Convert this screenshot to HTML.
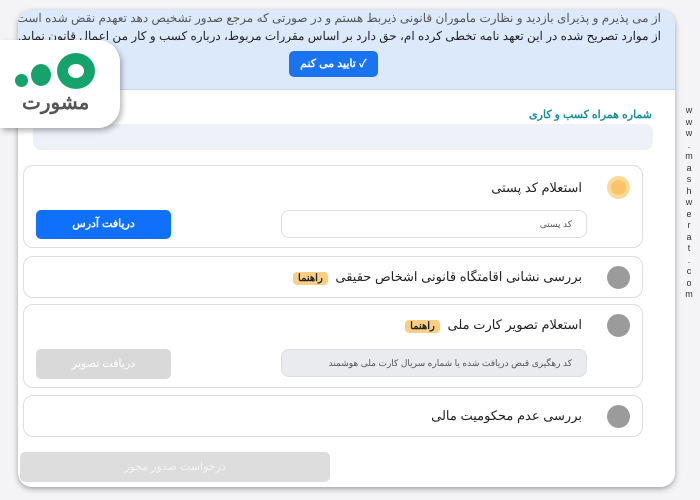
<!DOCTYPE html>
<html><head><meta charset="utf-8"><style>
*{box-sizing:border-box;margin:0;padding:0}
body{width:700px;height:500px;background:#f4f4f6;position:relative;overflow:hidden;font-family:"Liberation Sans","Noto Sans CJK SC",sans-serif;direction:rtl}
.frame{position:absolute;left:18px;top:10px;width:657px;height:477px;background:#fff;border-radius:14px;box-shadow:0 2px 6px rgba(0,0,0,.35);overflow:hidden}
.top{position:absolute;left:0;top:0;width:100%;height:80px;background:#dce9fb;border-bottom:1px solid #c9daf2}
.t{position:absolute;font-size:12px;color:#222;white-space:nowrap}
.btn{position:absolute;border-radius:5px;color:#fff;font-size:11px;text-align:center}
.card{position:absolute;left:5px;width:620px;border:1px solid #ddd;border-radius:10px;background:#fff}
.dot{position:absolute;right:12px;width:23px;height:23px;border-radius:50%;background:#9b9b9b}
.tag{display:inline-block;background:#f9cf83;border-radius:4px;padding:1px 5px;font-size:10px;font-weight:bold;margin:0 4px}
.in{position:absolute;border:1px solid #ddd;border-radius:8px;font-size:9px;color:#555;padding-right:14px}
</style></head><body>
<div class="frame">
 <div class="top">
  <div class="t" style="right:14px;top:1px;color:#555">از می پذیرم و پذیرای بازدید و نظارت ماموران قانونی ذیربط هستم و در صورتی که مرجع صدور تشخیص دهد تعهدم نقض شده است</div>
  <div class="t" style="right:14px;top:19px">از موارد تصریح شده در این تعهد نامه تخطی کرده ام، حق دارد بر اساس مقررات مربوط، درباره کسب و کار من اعمال قانون نماید.</div>
  <div class="btn" style="left:271px;top:41px;width:89px;height:26px;background:#1a74f0;line-height:26px;font-weight:bold">✓ تایید می کنم</div>
 </div>
 <div class="t" style="right:23px;top:98px;font-size:11px;font-weight:bold;color:#1a8e9a">شماره همراه کسب و کاری</div>
 <div style="position:absolute;left:15px;top:114px;width:620px;height:26px;background:#eef1f8;border-radius:8px"></div>
 <div class="card" style="top:155px;height:83px">
  <div style="position:absolute;right:12px;top:10px;width:23px;height:23px;border-radius:50%;background:#f7c46a;border:4px solid #fbd998"></div>
  <div class="t" style="right:60px;top:14px;font-size:13px">استعلام کد پستی</div>
  <div class="in" style="right:55px;top:44px;width:306px;height:28px;line-height:26px">کد پستی</div>
  <div class="btn" style="left:12px;top:44px;width:135px;height:29px;background:#1070fa;line-height:29px;font-weight:bold">دریافت آدرس</div>
 </div>
 <div class="card" style="top:246px;height:42px">
  <div class="dot" style="top:9px"></div>
  <div class="t" style="right:60px;top:12px;font-size:13px">بررسی نشانی اقامتگاه قانونی اشخاص حقیقی <span class="tag">راهنما</span></div>
 </div>
 <div class="card" style="top:294px;height:84px">
  <div class="dot" style="top:9px"></div>
  <div class="t" style="right:60px;top:12px;font-size:13px">استعلام تصویر کارت ملی <span class="tag">راهنما</span></div>
  <div class="in" style="right:55px;top:44px;width:306px;height:28px;line-height:26px;background:#e9ebef">کد رهگیری قبض دریافت شده یا شماره سریال کارت ملی هوشمند</div>
  <div class="btn" style="left:12px;top:44px;width:135px;height:30px;background:#d9d9d9;line-height:30px">دریافت تصویر</div>
 </div>
 <div class="card" style="top:385px;height:42px">
  <div class="dot" style="top:9px"></div>
  <div class="t" style="right:60px;top:12px;font-size:13px">بررسی عدم محکومیت مالی</div>
 </div>
 <div class="btn" style="left:2px;top:442px;width:310px;height:30px;background:#ddd;line-height:30px;color:#f4f4f4">درخواست صدور مجوز</div>
</div>
<div style="position:absolute;left:0;top:40px;width:120px;height:88px;background:#fff;border-radius:0 22px 22px 0;box-shadow:2px 3px 6px rgba(0,0,0,.3)">
 <div style="position:absolute;left:15px;top:34px;width:13px;height:13px;border-radius:50%;background:#16a36b"></div>
 <div style="position:absolute;left:31px;top:24px;width:20px;height:22px;border-radius:50%;background:#16a36b"></div>
 <div style="position:absolute;left:57px;top:13px;width:38px;height:36px;border-radius:50%;border:11px solid #16a36b"></div>
 <div class="t" style="left:22px;top:50px;font-size:20px;color:#555;font-weight:bold;direction:rtl">مشورت</div>
</div>
<div style="position:absolute;left:684px;top:105px;width:10px;font-size:9px;color:#333;line-height:11.5px;text-align:center;direction:ltr">w<br>w<br>w<br>.<br>m<br>a<br>s<br>h<br>w<br>e<br>r<br>a<br>t<br>.<br>c<br>o<br>m</div>
</body></html>
